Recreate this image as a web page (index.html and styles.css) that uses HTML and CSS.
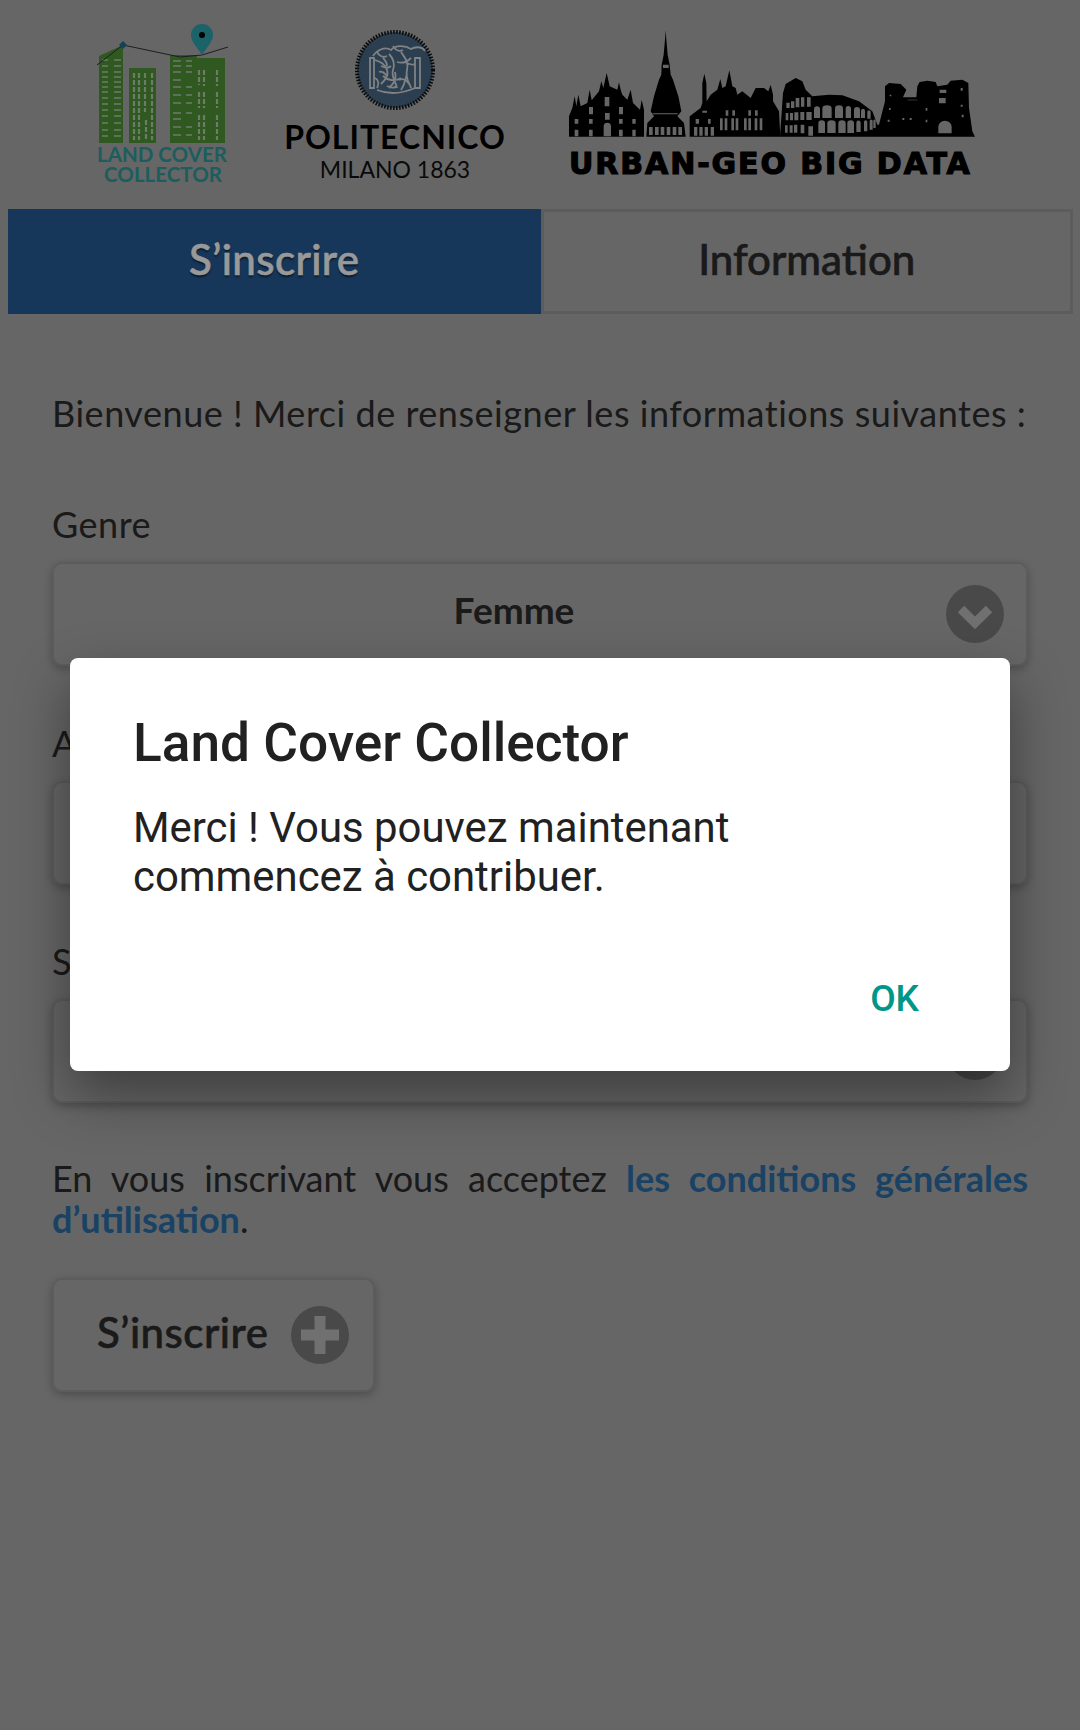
FILE: index.html
```html
<!DOCTYPE html>
<html lang="fr">
<head>
<meta charset="utf-8">
<title>Land Cover Collector</title>
<link rel="stylesheet" href="styles.css">
</head>
<body>
<div class="page">
  <header class="logos">
    <svg class="logo-lcc" width="150" height="170" viewBox="0 0 150 170">
      <g class="lcc-green">
        <path d="M9 36 L33 25 V123 H9Z"/><rect x="39" y="48" width="27" height="75"/><rect x="80" y="35" width="27" height="88"/><rect x="105" y="38" width="30" height="85"/>
      </g>
      <g class="lcc-win">
        <path d="M12 40H18M24 40H31M12 46H18M24 46H31M12 52H18M24 52H31M12 57H18M24 57H31M12 62H18M24 62H31M12 67H18M24 67H31M12 72H18M24 72H31M12 78H18M24 78H31M12 84H18M24 84H31M12 90H18M24 90H31M12 96H18M24 96H31M12 103H18M24 103H31M12 110H18M24 110H31M12 116H18M24 116H31"/>
        <path d="M83 41H91M96 41H102M83 46H91M96 46H102M83 52H91M96 52H102M83 60H91M83 67H91M96 67H102M83 75H91M96 75H102M83 83H91M96 83H102M83 93H91M96 93H102M83 99H91M83 107H91M96 107H102M83 115H91M96 115H102"/>
        <path class="lcc-tall" d="M44 53V120M49 53V120M55 53V92M62 53V120M56 100V120M109 50V65M114 50V66M127 50V66M127 72V88M109 72V88M114 72V88M109 95V120M114 95V120M127 95V120"/>
      </g>
      <path class="lcc-line" d="M7 45L33 25L90 37L112 35M112 35L138 27"/>
      <path class="lcc-diamond" d="M33 21l4 4-4 4-4-4z"/>
      <path class="lcc-pin" d="M112 35C106 26 101 21 101 15a11 11 0 0 1 22 0C123 21 118 26 112 35Z"/>
      <circle class="lcc-dot" cx="112" cy="15" r="3"/>
      <text class="lcc-text" x="7" y="142" textLength="130" lengthAdjust="spacingAndGlyphs">LAND COVER</text>
      <text class="lcc-text" x="14" y="162" textLength="118" lengthAdjust="spacingAndGlyphs">COLLECTOR</text>
    </svg>
    <div class="logo-poli">
      <svg width="84" height="84" viewBox="0 0 84 84">
        <circle class="seal-bg" cx="42" cy="42" r="38"/>
        <path class="seal-art" d="M17 30h4v30h-4zM62 30h5v30h-5zM20 28c4-6 12-10 18-6 4-5 14-5 20-1 5-3 12-2 14 2M22 32c6 2 10 4 12 10s-2 10-6 14M36 26c4 4 6 10 4 16s2 10 4 18M48 24c4 6 8 10 6 18s2 12 4 18M24 62c10 4 24 4 38-2M28 38c4 2 8 2 10 0M44 34c6 2 10 0 14-4M30 48c4 4 12 6 18 2M42 44c2 8-2 12-6 16M54 46c-2 6-2 10-6 16M24 24c2 4 6 6 10 4M40 18c2 4 6 6 10 4M26 44c4-2 6 2 8 4M46 52c4-2 8 0 10 4M22 50c4 2 4 6 2 10M34 58c4 2 8 2 10 0M52 34c4 2 8 4 10 2M30 30c2 2 4 4 4 8"/>
      </svg>
      <div class="poli-name">POLITECNICO</div>
      <div class="poli-sub">MILANO 1863</div>
    </div>
    <div class="logo-urban">
      <svg class="skyline" width="408" height="106" viewBox="0 0 408 106">
        <g transform="translate(-9 -8) scale(.33333)">
          <path class="sky-dark" d="M30 341V280L40 255L47 220L52 250L58 215L65 250L85 240L92 200L98 232L120 205L127 175L133 195L143 150L152 190L175 200L180 178L185 200L190 215L205 230L215 200L222 240L243 260L248 230L255 260V341Z"/>
          <path class="sky-dark" d="M262 341L265 300L285 280L275 265L285 220L300 170L307 155L308 125L314 95L318 50L320 22L322 50L326 95L332 125L335 155L342 170L358 220L367 265L355 280L375 300L380 341Z"/>
          <path class="sky-dark" d="M392 341V280L425 255L430 240V180L436 152L442 180L443 235L455 215L475 200L484 168L490 195L500 190L511 142L520 190L530 195L535 215L550 205L575 225L590 195H615L628 205L635 185L642 215V235L660 265L664 341Z"/>
          <path class="sky-light" d="M47 288h11v14h-11zM90 288h11v14h-11zM180 288h11v14h-11zM220 288h10v14h-10zM47 320h11v20h-11zM90 320h11v20h-11zM180 320h11v20h-11zM220 320h10v20h-10zM134 340v-30a11 11 0 0 1 22 0v30zM137 222h14v28h-14zM90 252h12v22h-12zM180 252h12v22h-12zM138 270h14v20h-14zM270 312h11v24h-11zM288 312h11v24h-11zM305 312h11v24h-11zM323 312h11v24h-11zM341 312h11v24h-11zM358 312h11v24h-11zM281 271h75v3h-75zM312 125h17v10h-17zM405 312h10v26h-10zM421 312h10v26h-10zM437 312h10v26h-10zM455 312h10v26h-10zM483 286h8v36h-8zM497 286h8v36h-8zM517 286h8v36h-8zM530 286h8v36h-8zM555 286h8v36h-8zM568 286h8v36h-8zM587 286h8v36h-8zM602 286h8v36h-8zM500 262h8v16h-8zM520 262h8v16h-8zM568 262h8v16h-8zM588 262h8v16h-8zM410 288h10v14h-10zM447 288h8v14h-8zM430 263h14v6h-14z"/>
          <g transform="translate(660 105)">
            <path class="sky-dark" d="M3 236L12 105L20 78L50 60L70 70L80 95L100 115L150 110L190 112L240 130L280 160L295 200L300 200L318 130V85L330 75L365 78L382 95L372 118H412L415 85L422 72L445 68L470 72L475 85L505 80L515 68L550 65L568 75L570 150L580 220L588 236Z"/>
            <path class="sky-light" d="M22 134h10v16h-10zM36 130h10v20h-10zM50 120h11v28h-11zM66 118h10v28h-10zM84 118h11v28h-11zM20 165h8v22h-8zM33 165h9v22h-9zM46 163h12v24h-12zM64 162h12v24h-12zM82 162h16v24h-16zM18 202h8v22h-8zM32 202h9v22h-9zM45 200h10v24h-10zM65 200h11v26h-11zM88 205h14v28h-14zM105 180v-26a8 8 0 0 1 18 0v26zM130 180v-28a14 10 0 0 1 28 0v28zM168 180v-28a12 10 0 0 1 24 0v28zM200 180v-28a8 8 0 0 1 16 0v28zM225 180v-24a8 8 0 0 1 18 0v24zM246 180v-22a6 6 0 0 1 12 0v22zM265 182v-20a5 5 0 0 1 10 0v20zM118 225v-30a10 8 0 0 1 20 0v30zM145 225v-30a12 8 0 0 1 25 0v30zM178 225v-30a11 8 0 0 1 22 0v30zM205 225v-30a10 8 0 0 1 20 0v30zM232 222v-28a6 6 0 0 1 13 0v28zM255 220v-28a5 5 0 0 1 10 0v28zM272 215v-26a4 4 0 0 1 9 0v26zM283 210v-22a3 3 0 0 1 7 0v22zM478 226v-20a20 18 0 0 1 40 0v20zM480 120h20v16h-20zM482 95h20v10h-20zM385 125h30v2h-30zM332 110h5v5h-5zM330 150h5v6h-5zM326 185h6v6h-6zM370 180h6v6h-6zM392 180h6v6h-6zM440 150h5v8h-5zM440 185h5v8h-5zM545 90h6v8h-6zM548 170h6v8h-6zM545 140h6v6h-6z"/>
          </g>
        </g>
      </svg>
      <div class="urban-text">URBAN-GEO BIG DATA</div>
    </div>
  </header>

  <nav class="tabs">
    <div class="tab tab-active">S’inscrire</div>
    <div class="tab">Information</div>
  </nav>

  <main class="content">
    <p class="intro">Bienvenue ! Merci de renseigner les informations suivantes :</p>

    <div class="field">
      <label class="label">Genre</label>
      <div class="select">
        <span class="select-value">Femme</span>
        <svg class="round-icon" width="58" height="58" viewBox="0 0 58 58"><circle class="icon-disc" cx="29" cy="29" r="29"/><path class="icon-chevron" d="M15 24l14 14 14-14"/></svg>
      </div>
    </div>
    <div class="field">
      <label class="label">Age</label>
      <div class="select">
        <span class="select-value">&nbsp;</span>
        <svg class="round-icon" width="58" height="58" viewBox="0 0 58 58"><circle class="icon-disc" cx="29" cy="29" r="29"/><path class="icon-chevron" d="M15 24l14 14 14-14"/></svg>
      </div>
    </div>
    <div class="field">
      <label class="label">Statut</label>
      <div class="select">
        <span class="select-value">&nbsp;</span>
        <svg class="round-icon" width="58" height="58" viewBox="0 0 58 58"><circle class="icon-disc" cx="29" cy="29" r="29"/><path class="icon-chevron" d="M15 24l14 14 14-14"/></svg>
      </div>
    </div>

    <p class="terms">En vous inscrivant vous acceptez <a class="terms-link">les conditions générales d’utilisation</a>.</p>

    <div class="submit">
      <span class="submit-label">S’inscrire</span>
      <svg class="round-icon" width="58" height="58" viewBox="0 0 58 58"><circle class="icon-disc" cx="29" cy="29" r="29"/><path class="icon-plus" d="M29 10v38M10 29h38"/></svg>
    </div>
  </main>
</div>

<div class="overlay">
  <div class="dialog">
    <h1 class="dialog-title">Land Cover Collector</h1>
    <p class="dialog-text">Merci ! Vous pouvez maintenant commencez à contribuer.</p>
    <div class="dialog-actions"><span class="dialog-ok">OK</span></div>
  </div>
</div>
</body>
</html>
```
FILE: styles.css
```css
* { box-sizing: border-box; }
html, body { margin: 0; padding: 0; }
body {
  width: 1080px;
  height: 1730px;
  overflow: hidden;
  background: #aaa;
  font-family: "Lato", "Noto Sans", sans-serif;
  color: #2c2c2c;
  position: relative;
}
.page { padding: 0 8px; }

.logos {
  height: 209px;
  display: flex;
  align-items: flex-start;
  padding-left: 82px;
}
.logo-lcc { margin-top: 20px; flex: none; }
.lcc-green { fill: #4f9436; }
.lcc-win { stroke: #b8cdb0; stroke-width: 1.4; fill: none; }
.lcc-tall { stroke-dasharray: 5 2; stroke-width: 2.2; }
.lcc-line { stroke: #333; stroke-width: 1; fill: none; }
.lcc-diamond { fill: #1e6f90; }
.lcc-pin { fill: #2ea3b0; }
.lcc-dot { fill: #000; }
.lcc-text { font: 700 20px "Lato", sans-serif; fill: #2f9c9c; }

.logo-poli {
  margin-left: 43px;
  width: 224px;
  display: flex;
  flex-direction: column;
  align-items: center;
  padding-top: 28px;
  flex: none;
}
.logo-poli svg { display: block; }
.seal-bg { fill: #4a6a86; stroke: #111; stroke-width: 4; stroke-dasharray: 1.5 1.5; }
.seal-art { fill: none; stroke: #d4d8dc; stroke-width: 1.8; }
.poli-name { font: 700 32px/34px "Lato", sans-serif; color: #000; margin-top: 8px; letter-spacing: 1px; white-space: nowrap; }
.poli-sub { font: 400 23px/24px "Lato", sans-serif; color: #111; margin-top: 3px; white-space: nowrap; }

.logo-urban { margin-left: 61px; padding-top: 31px; flex: none; width: 412px; }
.skyline { display: block; }
.sky-dark { fill: #000; }
.sky-light { fill: #aaa; }
.urban-text { font: 700 30px/30px "DejaVu Sans", sans-serif; color: #000; letter-spacing: 1.9px; white-space: nowrap; -webkit-text-stroke: 1.2px #000; margin-top: 12px; margin-left: 1px; }

.tabs { display: flex; height: 105px; width: 1065px; }
.tab {
  flex: 1;
  display: flex;
  align-items: center;
  justify-content: center;
  font-size: 42px;
  font-weight: 500;
  -webkit-text-stroke: 0.6px currentColor;
  color: #2c2c2c;
  border: 3px solid #999;
  padding-bottom: 6px;
}
.tab-active { background: #265c96; border-color: #265c96; color: #fff; letter-spacing: 0.4px; text-shadow: 0 2px 2px rgba(0,0,0,.6); }

.content { padding: 0 44px; }
.intro { margin: 0; padding-top: 76px; font-size: 36px; line-height: 46px; white-space: nowrap; letter-spacing: 0.53px; }
.field { display: block; }
.field:first-of-type { margin-top: 65px; }
.field + .field { margin-top: 53.500px; }
.label { display: block; font-size: 36px; line-height: 46px; letter-spacing: 0.5px; height: 61px; }
.select {
  height: 104px;
  border: 2px solid #999;
  border-radius: 10px;
  box-shadow: 0 3px 8px rgba(0,0,0,.25);
  display: flex;
  align-items: center;
  padding: 0 22px 0 0;
}
.select-value { flex: 1; text-align: center; font-size: 37px; font-weight: 700; padding: 0 0 10px 28px; }
.round-icon { flex: none; }
.icon-disc { fill: #7a7a7a; }
.icon-chevron { fill: none; stroke: #bbb; stroke-width: 9; }
.icon-plus { fill: none; stroke: #bbb; stroke-width: 11; }
.terms { margin: 54.500px 0 0; font-size: 36px; line-height: 41.500px; text-align: justify; }
.terms-link { color: #2a6fa8; font-weight: 700; }
.submit {
  margin-top: 37px;
  width: 323px;
  height: 114px;
  border: 2px solid #999;
  border-radius: 10px;
  box-shadow: 0 3px 8px rgba(0,0,0,.25);
  display: flex;
  align-items: center;
  justify-content: space-between;
  padding: 0 24px 0 43px;
  font-size: 42px;
  font-weight: 500;
}
.submit-label { letter-spacing: 0.5px; -webkit-text-stroke: 0.6px currentColor; padding-bottom: 6px; }

.overlay { position: absolute; inset: 0; background: rgba(0,0,0,.4); }
.dialog {
  position: absolute;
  left: 70px;
  top: 658px;
  width: 940px;
  height: 413px;
  background: #fff;
  border-radius: 8px;
  box-shadow: 0 24px 55px rgba(0,0,0,.4);
  padding: 56px 63px 0;
  font-family: "Roboto", sans-serif;
}
.dialog-title { margin: 0; font-size: 53.200px; line-height: 58px; font-weight: 500; color: #212121; }
.dialog-text { margin: 31px 0 0; font-size: 41.900px; line-height: 49px; color: #212121; width: 700px; }
.dialog-actions { display: flex; justify-content: flex-end; margin-top: 74px; padding-right: 28px; }
.dialog-ok { font-size: 37px; line-height: 48px; font-weight: 500; color: #009688; }
```
